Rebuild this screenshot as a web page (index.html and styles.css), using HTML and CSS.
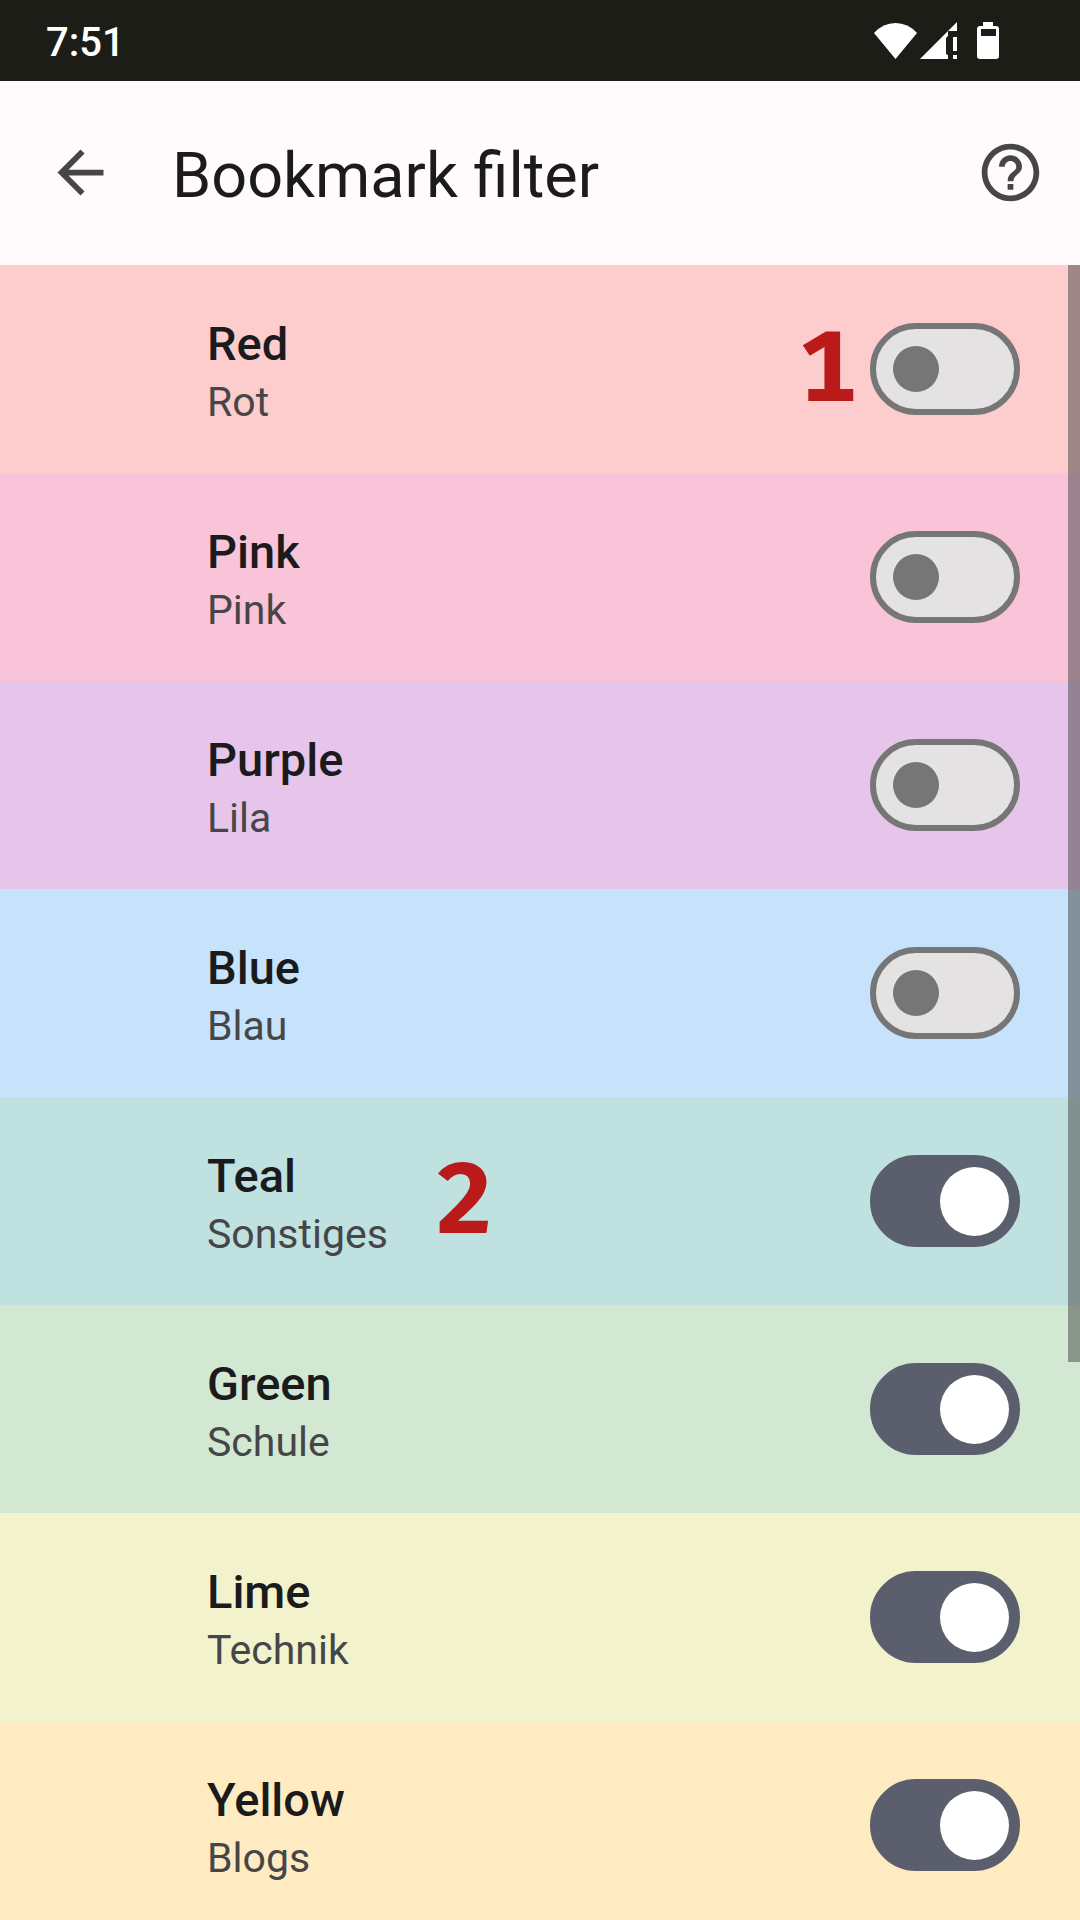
FILE: index.html
```html
<!DOCTYPE html>
<html lang="en">
<head>
<meta charset="utf-8">
<meta name="viewport" content="width=device-width, initial-scale=1">
<title>Bookmark filter</title>
<link rel="stylesheet" href="styles.css">
</head>
<body>
<div class="status-bar">
  <span class="clock">7:51</span>
  <div class="status-icons">
    <svg class="wifi" viewBox="0 0 43 36" aria-hidden="true"><path d="M0 10Q9 0 21.500 0T43 10L21.500 36Z"/></svg>
    <svg class="signal" viewBox="0 0 37 37" aria-hidden="true"><path d="M37 0V9H28V14Q26 15 26 17V31Q26 33 28 33V37H0ZM33 15H37V29H33ZM33 33H37V37H33Z"/></svg>
    <svg class="battery" viewBox="0 0 22 37" aria-hidden="true"><path fill-rule="evenodd" d="M6 0H16V4H19Q22 4 22 7V34Q22 37 19 37H3Q0 37 0 34V7Q0 4 3 4H6ZM4 7V14H19V7Z"/></svg>
  </div>
</div>
<header class="app-bar">
  <button class="icon-button" type="button" aria-label="Back">
    <svg viewBox="0 0 24 24" aria-hidden="true"><path d="M20 11H7.830L13.420 5.410L12 4L4 12L12 20L13.410 18.590L7.830 13H20Z"/></svg>
  </button>
  <h1 class="title">Bookmark filter</h1>
  <button class="icon-button" type="button" aria-label="Help">
    <svg viewBox="0 0 24 24" aria-hidden="true"><path d="M11 18h2v-2h-2v2zm1-16C6.480 2 2 6.480 2 12s4.480 10 10 10 10-4.480 10-10S17.520 2 12 2zm0 18c-4.410 0-8-3.590-8-8s3.590-8 8-8 8 3.590 8 8-3.590 8-8 8zm0-14c-2.210 0-4 1.790-4 4h2c0-1.100.900-2 2-2s2 .900 2 2c0 2-3 1.750-3 5h2c0-2.250 3-2.500 3-5 0-2.210-1.790-4-4-4z"/></svg>
  </button>
</header>
<main class="content">
  <div class="filters">
    <label class="row red"><span class="text"><span class="name">Red</span><span class="note">Rot</span></span><input class="switch" type="checkbox" role="switch"><span class="marker marker-switch">1</span></label>
    <label class="row pink"><span class="text"><span class="name">Pink</span><span class="note">Pink</span></span><input class="switch" type="checkbox" role="switch"></label>
    <label class="row purple"><span class="text"><span class="name">Purple</span><span class="note">Lila</span></span><input class="switch" type="checkbox" role="switch"></label>
    <label class="row blue"><span class="text"><span class="name">Blue</span><span class="note">Blau</span></span><input class="switch" type="checkbox" role="switch"></label>
    <label class="row teal"><span class="text"><span class="name">Teal</span><span class="note">Sonstiges</span></span><input class="switch" type="checkbox" role="switch" checked><span class="marker marker-text">2</span></label>
    <label class="row green"><span class="text"><span class="name">Green</span><span class="note">Schule</span></span><input class="switch" type="checkbox" role="switch" checked></label>
    <label class="row lime"><span class="text"><span class="name">Lime</span><span class="note">Technik</span></span><input class="switch" type="checkbox" role="switch" checked></label>
    <label class="row yellow"><span class="text"><span class="name">Yellow</span><span class="note">Blogs</span></span><input class="switch" type="checkbox" role="switch" checked></label>
  </div>
  <div class="scrollbar"></div>
</main>
</body>
</html>
```
FILE: styles.css
```css
* {
  box-sizing: border-box;
}

body {
  margin: 0;
  height: 100vh;
  display: flex;
  flex-direction: column;
  overflow: hidden;
  background: #fffbfc;
  color: #1b1b1d;
  font-family: Roboto, "Liberation Sans", sans-serif;
}

.status-bar {
  flex: none;
  display: flex;
  align-items: center;
  justify-content: space-between;
  height: 81px;
  padding: 0 81px 0 46px;
  background: #1c1d17;
  color: #fff;
}

.clock {
  padding-top: 4px;
  font-size: 40px;
  line-height: 48px;
  font-weight: 500;
}

.status-icons {
  display: flex;
  align-items: center;
}

.status-icons svg {
  fill: currentColor;
}

.wifi {
  width: 43px;
  height: 36px;
}

.signal {
  width: 37px;
  height: 37px;
  margin: 0 20px 0 3px;
}

.battery {
  width: 22px;
  height: 37px;
}

.app-bar {
  flex: none;
  display: flex;
  align-items: center;
  height: 184px;
  padding: 0 35px 2px 46px;
}

.icon-button {
  display: flex;
  padding: 0;
  border: 0;
  background: none;
  color: #464648;
}

.icon-button svg {
  width: 69px;
  height: 69px;
  fill: currentColor;
}

.title {
  flex: 1;
  margin: 0 0 0 57px;
  padding-top: 8px;
  font-size: 63px;
  line-height: 80px;
  font-weight: 400;
}

.content {
  flex: 1;
  min-height: 0;
  position: relative;
}

.filters {
  height: 100%;
  overflow: hidden;
}

.row {
  position: relative;
  display: flex;
  align-items: center;
  justify-content: space-between;
  height: 208px;
  padding: 0 60px 0 207px;
}

.red { background: #fdcccc; }
.pink { background: #f9c3d8; }
.purple { background: #e7c5eb; }
.blue { background: #c7e2fb; }
.teal { background: #bfe1e0; }
.green { background: #d2e8d3; }
.lime { background: #f2f2cd; }
.yellow { background: #ffebc2; }

.text {
  display: flex;
  flex-direction: column;
  padding-top: 6px;
}

.name {
  font-size: 47px;
  line-height: 60px;
  font-weight: 500;
}

.note {
  font-size: 41px;
  line-height: 56px;
  color: #464648;
}

.switch {
  appearance: none;
  display: flex;
  align-items: center;
  width: 150px;
  height: 92px;
  margin: 0;
  padding: 0 17px;
  border: 6px solid #767676;
  border-radius: 46px;
  background: #e4e2e3;
}

.switch::before {
  content: "";
  width: 46px;
  height: 46px;
  border-radius: 50%;
  background: #767676;
}

.switch:checked {
  justify-content: flex-end;
  padding: 0 5px;
  border-color: #5b5e6c;
  background: #5b5e6c;
}

.switch:checked::before {
  width: 69px;
  height: 69px;
  background: #fff;
}

.marker {
  position: absolute;
  top: 33px;
  font-family: "Fira Sans", "Noto Sans CJK SC", sans-serif;
  font-size: 101px;
  line-height: 140px;
  font-weight: 700;
  font-variant-numeric: lining-nums tabular-nums;
  color: #ba1a1a;
}

.marker-switch {
  right: 224px;
}

.marker-text {
  left: 436px;
}

.scrollbar {
  position: absolute;
  top: 0;
  right: 0;
  width: 12px;
  height: 66.3%;
  background: rgba(71, 71, 71, 0.52);
}
```
